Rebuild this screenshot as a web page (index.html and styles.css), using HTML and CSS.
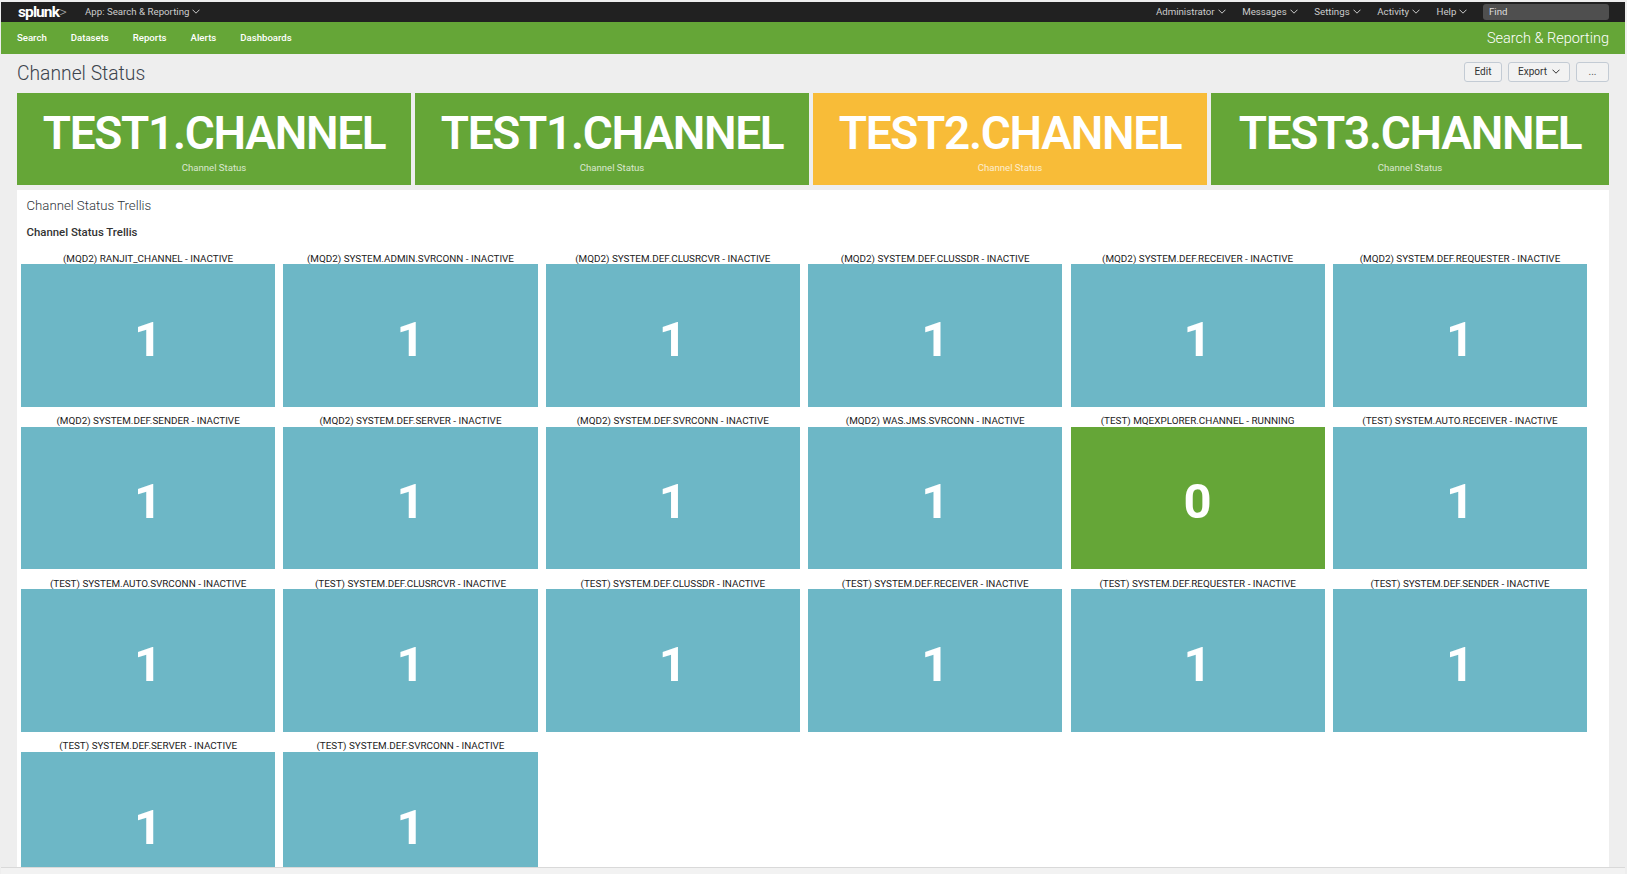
FILE: index.html
```html
<!DOCTYPE html>
<html lang="en">
<head>
<meta charset="utf-8">
<title>Channel Status</title>
<link rel="stylesheet" href="styles.css">
</head>
<body>
<div class="page">
  <header class="topbar">
    <div class="topbar-left">
      <span class="logo">splunk<span class="logo-gt">&gt;</span></span>
      <span class="menu">App: Search &amp; Reporting<svg class="chev" viewBox="0 0 8 5"><path d="M.5.7 4 4.2 7.5.7"/></svg></span>
    </div>
    <div class="topbar-right">
      <span class="menu">Administrator<svg class="chev" viewBox="0 0 8 5"><path d="M.5.7 4 4.2 7.5.7"/></svg></span>
      <span class="menu">Messages<svg class="chev" viewBox="0 0 8 5"><path d="M.5.7 4 4.2 7.5.7"/></svg></span>
      <span class="menu">Settings<svg class="chev" viewBox="0 0 8 5"><path d="M.5.7 4 4.2 7.5.7"/></svg></span>
      <span class="menu">Activity<svg class="chev" viewBox="0 0 8 5"><path d="M.5.7 4 4.2 7.5.7"/></svg></span>
      <span class="menu">Help<svg class="chev" viewBox="0 0 8 5"><path d="M.5.7 4 4.2 7.5.7"/></svg></span>
      <span class="find">Find</span>
    </div>
  </header>
  <nav class="appbar">
    <div class="app-links">
      <a>Search</a><a>Datasets</a><a>Reports</a><a>Alerts</a><a>Dashboards</a>
    </div>
    <div class="app-name">Search &amp; Reporting</div>
  </nav>
  <main class="content">
    <div class="title-row">
      <h1>Channel Status</h1>
      <div class="actions">
        <button class="btn btn-edit">Edit</button>
        <button class="btn btn-export">Export<svg class="chev chev-dark" viewBox="0 0 8 5"><path d="M.5.7 4 4.2 7.5.7"/></svg></button>
        <button class="btn btn-more">...</button>
      </div>
    </div>
    <section class="singles">
      <div class="single green"><div class="single-value">TEST1.CHANNEL</div><div class="single-label">Channel Status</div></div>
      <div class="single green"><div class="single-value">TEST1.CHANNEL</div><div class="single-label">Channel Status</div></div>
      <div class="single yellow"><div class="single-value">TEST2.CHANNEL</div><div class="single-label">Channel Status</div></div>
      <div class="single green"><div class="single-value">TEST3.CHANNEL</div><div class="single-label">Channel Status</div></div>
    </section>
    <section class="panel">
      <h2>Channel Status Trellis</h2>
      <h3>Channel Status Trellis</h3>
      <div class="trellis">
        <div class="cell"><div class="cell-label">(MQD2) RANJIT_CHANNEL - INACTIVE</div><div class="tile">1</div></div>
        <div class="cell"><div class="cell-label">(MQD2) SYSTEM.ADMIN.SVRCONN - INACTIVE</div><div class="tile">1</div></div>
        <div class="cell"><div class="cell-label">(MQD2) SYSTEM.DEF.CLUSRCVR - INACTIVE</div><div class="tile">1</div></div>
        <div class="cell"><div class="cell-label">(MQD2) SYSTEM.DEF.CLUSSDR - INACTIVE</div><div class="tile">1</div></div>
        <div class="cell"><div class="cell-label">(MQD2) SYSTEM.DEF.RECEIVER - INACTIVE</div><div class="tile">1</div></div>
        <div class="cell"><div class="cell-label">(MQD2) SYSTEM.DEF.REQUESTER - INACTIVE</div><div class="tile">1</div></div>
        <div class="cell"><div class="cell-label">(MQD2) SYSTEM.DEF.SENDER - INACTIVE</div><div class="tile">1</div></div>
        <div class="cell"><div class="cell-label">(MQD2) SYSTEM.DEF.SERVER - INACTIVE</div><div class="tile">1</div></div>
        <div class="cell"><div class="cell-label">(MQD2) SYSTEM.DEF.SVRCONN - INACTIVE</div><div class="tile">1</div></div>
        <div class="cell"><div class="cell-label">(MQD2) WAS.JMS.SVRCONN - INACTIVE</div><div class="tile">1</div></div>
        <div class="cell"><div class="cell-label">(TEST) MQEXPLORER.CHANNEL - RUNNING</div><div class="tile tile-ok">0</div></div>
        <div class="cell"><div class="cell-label">(TEST) SYSTEM.AUTO.RECEIVER - INACTIVE</div><div class="tile">1</div></div>
        <div class="cell"><div class="cell-label">(TEST) SYSTEM.AUTO.SVRCONN - INACTIVE</div><div class="tile">1</div></div>
        <div class="cell"><div class="cell-label">(TEST) SYSTEM.DEF.CLUSRCVR - INACTIVE</div><div class="tile">1</div></div>
        <div class="cell"><div class="cell-label">(TEST) SYSTEM.DEF.CLUSSDR - INACTIVE</div><div class="tile">1</div></div>
        <div class="cell"><div class="cell-label">(TEST) SYSTEM.DEF.RECEIVER - INACTIVE</div><div class="tile">1</div></div>
        <div class="cell"><div class="cell-label">(TEST) SYSTEM.DEF.REQUESTER - INACTIVE</div><div class="tile">1</div></div>
        <div class="cell"><div class="cell-label">(TEST) SYSTEM.DEF.SENDER - INACTIVE</div><div class="tile">1</div></div>
        <div class="cell"><div class="cell-label">(TEST) SYSTEM.DEF.SERVER - INACTIVE</div><div class="tile">1</div></div>
        <div class="cell"><div class="cell-label">(TEST) SYSTEM.DEF.SVRCONN - INACTIVE</div><div class="tile">1</div></div>
      </div>
    </section>
  </main>
  <footer class="footer"></footer>
</div>
</body>
</html>
```
FILE: styles.css
```css
* { box-sizing: border-box; }
html, body { margin: 0; height: 100%; overflow: hidden; }
body {
  background: #f2f2f2;
  font-family: Roboto, "Liberation Sans", sans-serif;
  color: #333;
}
.page {
  height: 874px;
  display: flex;
  flex-direction: column;
  padding-top: 2px;
  padding-left: 1px;
  padding-right: 2px;
  background: #eee;
  overflow: hidden;
}
.topbar {
  height: 20px;
  flex: none;
  background: #212121;
  display: flex;
  justify-content: space-between;
  align-items: center;
  padding: 0 16px 0 17px;
  color: #ccc;
  font-size: 9.7px;
}
.topbar-left, .topbar-right { display: flex; align-items: center; }
.logo {
  color: #fff;
  font-size: 15.5px;
  font-weight: 700;
  letter-spacing: -.9px;
  width: 67px;
  line-height: 20px;
}
.logo-gt { font-weight: 300; color: #aaa; font-size: 15px; letter-spacing: 0; }
.menu { display: inline-flex; align-items: center; white-space: nowrap; margin-top: -1px; }
.chev { width: 8px; height: 5px; margin-left: 3px; fill: none; stroke: currentColor; stroke-width: 1; }
.topbar-right .menu { margin-right: 16.6px; }
.find {
  width: 126px;
  height: 16px;
  margin-left: -1px;
  padding-left: 6px;
  background: #4f4f4f;
  border-radius: 3px;
  line-height: 16px;
  color: #ddd;
}
.appbar {
  height: 32px;
  flex: none;
  background: #65a637;
  display: flex;
  justify-content: space-between;
  align-items: center;
  padding: 0 16px;
  color: #fff;
}
.app-links { display: flex; gap: 24px; margin-top: -1px; font-size: 9.6px; font-weight: 500; }
.app-name { font-size: 14.5px; font-weight: 300; }
.content {
  flex: 1;
  min-height: 0;
  padding: 0 16px;
  overflow: hidden;
  display: flex;
  flex-direction: column;
}
.title-row {
  height: 39px;
  flex: none;
  display: flex;
  justify-content: space-between;
  align-items: center;
}
h1 { margin: 0; font-size: 19.3px; font-weight: 300; color: #3c444d; }
.actions { display: flex; gap: 6px; margin-top: -4px; }
.btn {
  height: 20px;
  padding: 0;
  border: 1px solid #c3cbd4;
  border-radius: 3px;
  background: #f2f2f2;
  font: 400 10px Roboto, sans-serif;
  color: #333;
  display: flex;
  align-items: center;
  justify-content: center;
}
.btn-edit { width: 38px; }
.btn-export { width: 62px; }
.btn-more { width: 33px; color: #555; }
.chev-dark { margin-left: 5px; }
.singles {
  display: grid;
  grid-template-columns: repeat(3, 394px) 1fr;
  gap: 4px;
  flex: none;
}
.single {
  height: 92px;
  color: #fff;
  text-align: center;
  padding-top: 10px;
}
.green { background: #65a637; }
.yellow { background: #f8bc38; }
.single-value { font-size: 46px; font-weight: 600; line-height: 60px; letter-spacing: -1.3px; white-space: nowrap; }
.single-label { font-size: 9.6px; line-height: 14px; margin-top: -2px; opacity: .75; }
.panel {
  flex: 1;
  min-height: 0;
  margin-top: 5px;
  background: #fff;
  overflow: hidden;
}
h2 { margin: 0; padding: 8px 0 0 9.5px; font-size: 13.2px; font-weight: 300; line-height: 16px; color: #2f353b; }
h3 { margin: 0; padding: 10px 0 0 9.5px; font-size: 11.4px; font-weight: 500; line-height: 16px; color: #333; }
.trellis {
  display: grid;
  grid-template-columns: repeat(6, 254.2px);
  column-gap: 8.2px;
  grid-auto-rows: 162.6px;
  padding: 4px 0 0 4px;
}
.cell { display: flex; flex-direction: column; min-width: 0; }
.cell-label {
  height: 20px;
  flex: none;
  font-size: 9.9px;
  line-height: 12px;
  padding-top: 8.5px;
  text-align: center;
  white-space: nowrap;
  color: #222;
}
.tile {
  height: 142.6px;
  padding-top: 8px;
  background: #6db7c6;
  color: #fff;
  font-size: 49px;
  font-weight: 700;
  display: flex;
  align-items: center;
  justify-content: center;
}
.tile-ok { background: #65a637; }
.footer { height: 7px; flex: none; background: #f2f2f2; border-top: 1px solid #d9d9d9; }
```
